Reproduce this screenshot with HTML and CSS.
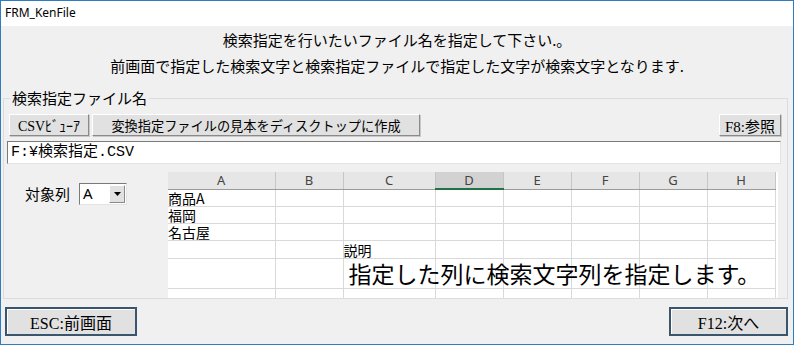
FILE: index.html
```html
<!DOCTYPE html>
<html lang="ja">

<head>
    <meta charset="UTF-8">
    <title>FRM_KenFile</title>
    <link rel="stylesheet" href="styles.css">
</head>

<body>
    <div class="window">
        <div class="titlebar">FRM_KenFile</div>

        <div class="content">
            <div class="message">
                <p>検索指定を行いたいファイル名を指定して下さい.。</p>
                <p>前画面で指定した検索文字と検索指定ファイルで指定した文字が検索文字となります.</p>
            </div>

            <fieldset class="group">
                <legend>検索指定ファイル名</legend>

                <div class="tool-row">
                    <div class="tool-left">
                        <div class="btn btn-serif btn-csv">CSVﾋﾞｭｰｱ</div>
                        <div class="btn btn-sample">変換指定ファイルの見本をディスクトップに作成</div>
                    </div>
                    <div class="btn btn-serif btn-ref">F8:参照</div>
                </div>

                <div class="path-field">F:¥検索指定.CSV</div>

                <div class="sheet-row">
                    <div class="column-pick">
                        <span class="pick-label">対象列</span>
                        <div class="combo">
                            <span class="combo-value">A</span>
                            <span class="combo-arrow">
                                <svg width="7" height="4" viewBox="0 0 7 4"><path d="M0 0h7L3.5 4z" fill="#000"/></svg>
                            </span>
                        </div>
                    </div>

                    <div class="sheet">
                        <table>
                            <colgroup>
                                <col class="w-a">
                                <col class="w-s">
                                <col class="w-c">
                                <col class="w-s">
                                <col class="w-s">
                                <col class="w-s">
                                <col class="w-s">
                                <col class="w-s">
                            </colgroup>
                            <tr class="head">
                                <th>A</th><th>B</th><th>C</th><th class="active">D</th><th>E</th><th>F</th><th>G</th><th>H</th>
                            </tr>
                            <tr class="r1">
                                <td>商品A</td><td></td><td></td><td></td><td></td><td></td><td></td><td></td>
                            </tr>
                            <tr class="r1">
                                <td>福岡</td><td></td><td></td><td></td><td></td><td></td><td></td><td></td>
                            </tr>
                            <tr class="r1">
                                <td>名古屋</td><td></td><td></td><td></td><td></td><td></td><td></td><td></td>
                            </tr>
                            <tr class="r2">
                                <td></td><td></td><td>説明</td><td></td><td></td><td></td><td></td><td></td>
                            </tr>
                            <tr class="r3">
                                <td></td><td></td><td class="big"><span>指定した列に検索文字列を指定します。</span></td><td></td><td></td><td></td><td></td><td></td>
                            </tr>
                            <tr class="r4">
                                <td></td><td></td><td></td><td></td><td></td><td></td><td></td><td></td>
                            </tr>
                        </table>
                    </div>
                </div>
            </fieldset>

            <div class="footer">
                <div class="btn btn-serif btn-default btn-back">ESC:前画面</div>
                <div class="btn btn-serif btn-default btn-next">F12:次へ</div>
            </div>
        </div>
    </div>
</body>

</html>
```

FILE: styles.css
```css
/* 全体 */
html,
body {
    margin: 0;
    padding: 0;
}

body {
    font-family: "Noto Sans CJK JP", sans-serif;
    color: #000000;
    background-color: #f0f0f0;
}

.window {
    box-sizing: border-box;
    width: 794px;
    height: 345px;
    border: 1px solid #2f7cc0;
    background-color: #f0f0f0;
    display: flex;
    flex-direction: column;
}

.titlebar {
    height: 25px;
    line-height: 24px;
    padding-left: 4px;
    background-color: #ffffff;
    font-family: "Noto Sans", sans-serif;
    font-size: 12px;
}

.content {
    flex: 1;
    display: flex;
    flex-direction: column;
}

/* メッセージ */
.message {
    padding-top: 1px;
    text-align: center;
    font-size: 15px;
}

.message p {
    margin: 0;
    height: 26px;
    line-height: 26px;
}

/* グループボックス */
.group {
    margin: 10px 5px 0 2px;
    padding: 0 6px 0 3px;
    border: 1px solid #dcdcdc;
    min-width: 0;
}

.group legend {
    margin-left: 3px;
    padding: 0 2px;
    font-size: 15px;
    line-height: 18px;
}

/* ボタン */
.btn {
    box-sizing: border-box;
    display: flex;
    align-items: center;
    justify-content: center;
    background-color: #e1e1e1;
    border: 1px solid;
    border-color: #ffffff #8a8a8a #8a8a8a #ffffff;
    box-shadow: 1px 1px 0 #c8c8c8;
    cursor: pointer;
}

.btn-serif {
    font-family: "Liberation Serif", "Noto Sans CJK JP", serif;
}

.tool-row {
    display: flex;
    justify-content: space-between;
    margin-top: 7px;
    margin-left: 2px;
}

.tool-left {
    display: flex;
    gap: 3px;
}

.tool-row .btn {
    height: 22px;
    font-size: 14px;
}

.btn-csv {
    width: 80px;
}

.tool-row .btn-sample {
    width: 328px;
    font-size: 13.2px;
}

.tool-row .btn-ref {
    width: 62px;
    font-size: 15px;
}

/* パス入力欄 */
.path-field {
    box-sizing: border-box;
    height: 23px;
    margin-top: 5px;
    padding-left: 3px;
    background-color: #ffffff;
    border: 1px solid;
    border-color: #7a7a7a #e3e3e3 #e3e3e3 #7a7a7a;
    font-family: "Liberation Mono", "Noto Sans CJK JP", monospace;
    font-size: 15px;
    line-height: 21px;
}

/* シート部分 */
.sheet-row {
    display: flex;
    margin-top: 8px;
}

.column-pick {
    width: 143px;
    padding-left: 18px;
    padding-top: 11px;
    display: flex;
    align-items: flex-start;
    gap: 9px;
}

.pick-label {
    font-size: 15px;
    line-height: 22px;
}

.combo {
    box-sizing: border-box;
    width: 48px;
    height: 22px;
    display: flex;
    background-color: #ffffff;
    border: 1px solid;
    border-color: #7a7a7a #e3e3e3 #e3e3e3 #7a7a7a;
}

.combo-value {
    flex: 1;
    padding-left: 3px;
    font-family: "Noto Sans", sans-serif;
    font-size: 15px;
    line-height: 19px;
}

.combo-arrow {
    box-sizing: border-box;
    width: 16px;
    margin: 1px;
    display: flex;
    align-items: center;
    justify-content: center;
    background-color: #e1e1e1;
    border: 1px solid;
    border-color: #ffffff #8a8a8a #8a8a8a #ffffff;
}

.sheet {
    width: 610px;
    height: 126px;
    overflow: hidden;
    background-color: #ffffff;
}

.sheet table {
    width: 607px;
    table-layout: fixed;
    border-collapse: collapse;
}

.w-a {
    width: 107px;
}

.w-c {
    width: 92px;
}

.w-s {
    width: 68px;
}

.sheet th {
    height: 16px;
    padding: 0;
    background-color: #e6e6e6;
    border-right: 1px solid #c6c6c6;
    border-bottom: 1px solid #9b9b9b;
    font-family: "Noto Sans", sans-serif;
    font-weight: normal;
    font-size: 13px;
    line-height: 16px;
    color: #444444;
}

.sheet th.active {
    background-color: #d2d2d2;
    border-bottom: 2px solid #217346;
}

.sheet td {
    padding: 0;
    border-right: 1px solid #d9d9d9;
    border-bottom: 1px solid #d9d9d9;
    font-size: 14px;
    line-height: 16px;
    white-space: nowrap;
    overflow: visible;
    vertical-align: bottom;
}

.sheet .r1 td {
    height: 16px;
}

.sheet .r2 td {
    height: 17px;
}

.sheet .r3 td {
    height: 29px;
}

.sheet .r4 td {
    height: 12px;
}

.sheet td.big {
    position: relative;
}

.sheet td.big span {
    position: absolute;
    left: 5px;
    bottom: 0;
    font-size: 23px;
    line-height: 30px;
}

/* 下部ボタン */
.footer {
    display: flex;
    justify-content: space-between;
    margin: 8px 5px 0 4px;
}

.btn-default {
    height: 29px;
    border: 2px solid #3b556d;
    box-shadow: inset 1px 1px 0 #ffffff;
    font-size: 16px;
}

.btn-back {
    width: 132px;
}

.btn-next {
    width: 119px;
}
```
